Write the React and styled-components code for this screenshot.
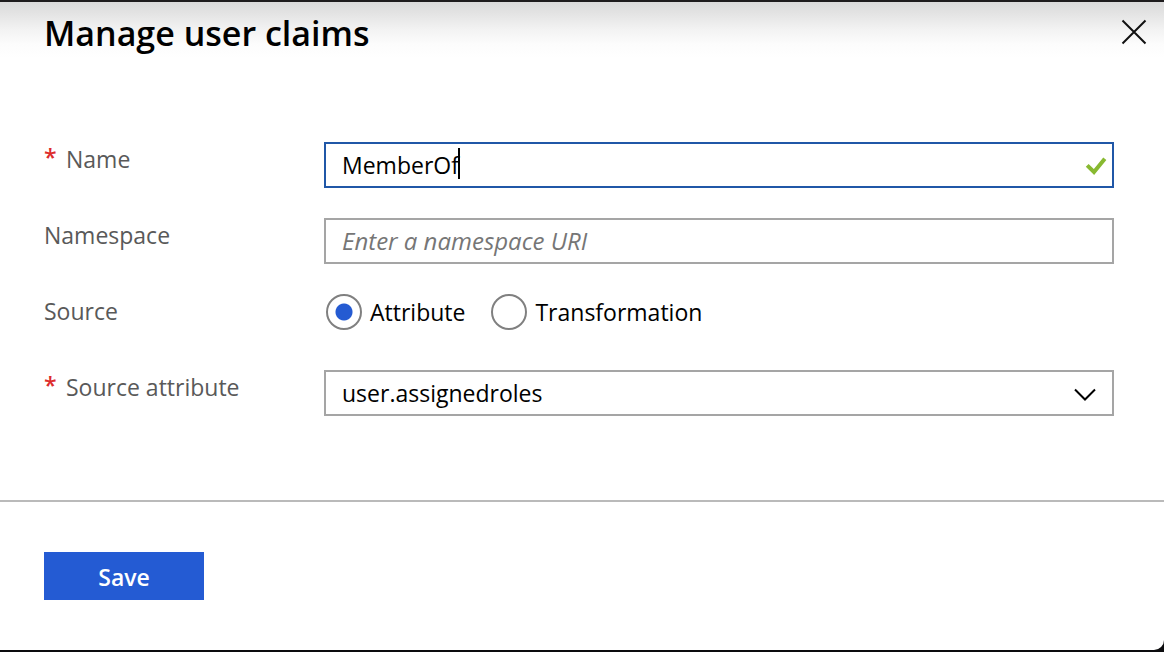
import React, { useState } from "react";
import styled, { createGlobalStyle, css } from "styled-components";

const GlobalStyle = createGlobalStyle`
  * { box-sizing: border-box; }
  body {
    margin: 0;
    background: #0c0c0e;
    color: #000;
    font-family: "Open Sans", "Noto Sans", sans-serif;
    font-size: 23px;
    line-height: 34px;
  }
  input, select, button { font: inherit; color: inherit; }
`;

const Window = styled.div`
  min-height: 100vh;
  display: flex;
  flex-direction: column;
  border-top: 2px solid #1e1c1d;
  border-bottom: 2px solid #0c0c0e;
`;

const Panel = styled.main`
  flex: 1;
  display: flex;
  flex-direction: column;
  background: linear-gradient(#dadada, #e4e4e4 12px, #f3f3f3 28px, #fcfcfc 42px, #fff 56px);
  border-bottom-right-radius: 10px;
`;

const Header = styled.header`
  display: flex;
  justify-content: space-between;
  align-items: flex-start;
  padding: 8px 16px 0 44px;
`;

const Title = styled.h1`
  margin: 0;
  font-size: 34px;
  line-height: 46px;
  font-weight: 600;
`;

const CloseButton = styled.button`
  display: flex;
  margin-top: 8px;
  padding: 0;
  border: 0;
  background: none;
`;

const Form = styled.form`
  flex: 1;
  display: flex;
  flex-direction: column;
`;

const Fields = styled.div`
  flex: 1;
  display: flex;
  flex-direction: column;
  gap: 30px;
  padding: 86px 50px 84px 44px;
`;

const Row = styled.div`
  display: grid;
  grid-template-columns: 280px 1fr;
  min-height: 46px;
`;

const Label = styled.label`
  display: flex;
  gap: 10px;
  color: #595959;
`;

const Required = styled.span`
  color: #dd2c2c;
  width: 12px;
  font-weight: 600;
  line-height: 30px;
`;

const Control = styled.div`
  position: relative;
  display: grid;
`;

const fieldBox = css`
  width: 100%;
  height: 46px;
  padding: 0 16px;
  border: 2px solid ${(p) => (p.$active ? "#2057a7" : "#a5a5a5")};
  border-radius: 0;
  outline: 0;
  background: #fff;
`;

const TextInput = styled.input`
  ${fieldBox}
  caret-color: ${(p) => (p.$active ? "transparent" : "#000")};
  &::placeholder {
    color: #767676;
    font-size: 24px;
    font-style: italic;
    opacity: 1;
  }
`;

const Select = styled.select`
  ${fieldBox}
  appearance: none;
`;

const Caret = styled.span`
  position: absolute;
  left: 134px;
  top: 6px;
  width: 2px;
  height: 31px;
  background: #000;
`;

const FieldIcon = styled.svg`
  position: absolute;
  right: ${(p) => p.$right}px;
  top: 12px;
  pointer-events: none;
`;

const RadioGroup = styled.div`
  display: flex;
  align-items: flex-start;
  gap: 26px;
  padding-left: 2px;
`;

const RadioLabel = styled.label`
  display: flex;
  align-items: center;
  gap: 8px;
`;

const Radio = styled.input`
  appearance: none;
  width: 36px;
  height: 36px;
  margin: 0;
  border: 2px solid #808080;
  border-radius: 50%;
  background: #fff;
  &:checked {
    background: radial-gradient(circle, #255bd2 8px, #fff 9px);
  }
`;

const Footer = styled.footer`
  padding: 50px 44px;
  border-top: 2px solid #bababa;
`;

const SaveButton = styled.button`
  display: block;
  width: 160px;
  height: 48px;
  padding: 2px 0 0;
  border: 0;
  background: #245bd3;
  color: #fff;
  font-weight: 600;
`;

export default function App() {
  const [name, setName] = useState("MemberOf");
  const [source, setSource] = useState("attribute");

  return (
    <>
      <GlobalStyle />
      <Window>
        <Panel>
          <Header>
            <Title>Manage user claims</Title>
            <CloseButton type="button" aria-label="Close">
              <svg width="28" height="28" viewBox="0 0 28 28" stroke="#111" strokeWidth="2" fill="none">
                <path d="M2.5 2.5 25.5 25.5M25.5 2.5 2.5 25.5" />
              </svg>
            </CloseButton>
          </Header>
          <Form onSubmit={(e) => e.preventDefault()}>
            <Fields>
              <Row>
                <Label htmlFor="name"><Required>*</Required>Name</Label>
                <Control>
                  <TextInput id="name" $active value={name} onChange={(e) => setName(e.target.value)} />
                  {name === "MemberOf" && <Caret />}
                  <FieldIcon $right={6} width="24" height="24" viewBox="0 0 24 24" fill="none" stroke="#88b931" strokeWidth="4">
                    <path d="M3.2 11.3 10 18 20.8 4.8" />
                  </FieldIcon>
                </Control>
              </Row>
              <Row>
                <Label htmlFor="namespace">Namespace</Label>
                <Control>
                  <TextInput id="namespace" placeholder="Enter a namespace URI" />
                </Control>
              </Row>
              <Row role="radiogroup" aria-labelledby="source-label">
                <Label as="span" id="source-label">Source</Label>
                <RadioGroup>
                  <RadioLabel>
                    <Radio type="radio" name="source" checked={source === "attribute"} onChange={() => setSource("attribute")} />
                    Attribute
                  </RadioLabel>
                  <RadioLabel>
                    <Radio type="radio" name="source" checked={source === "transformation"} onChange={() => setSource("transformation")} />
                    Transformation
                  </RadioLabel>
                </RadioGroup>
              </Row>
              <Row>
                <Label htmlFor="attribute"><Required>*</Required>Source attribute</Label>
                <Control>
                  <Select id="attribute" defaultValue="user.assignedroles">
                    <option>user.assignedroles</option>
                  </Select>
                  <FieldIcon $right={16} width="26" height="24" viewBox="0 0 26 24" fill="none" stroke="#000" strokeWidth="2">
                    <path d="M3 7.5 13 17.5 23 7.5" />
                  </FieldIcon>
                </Control>
              </Row>
            </Fields>
            <Footer>
              <SaveButton type="submit">Save</SaveButton>
            </Footer>
          </Form>
        </Panel>
      </Window>
    </>
  );
}
